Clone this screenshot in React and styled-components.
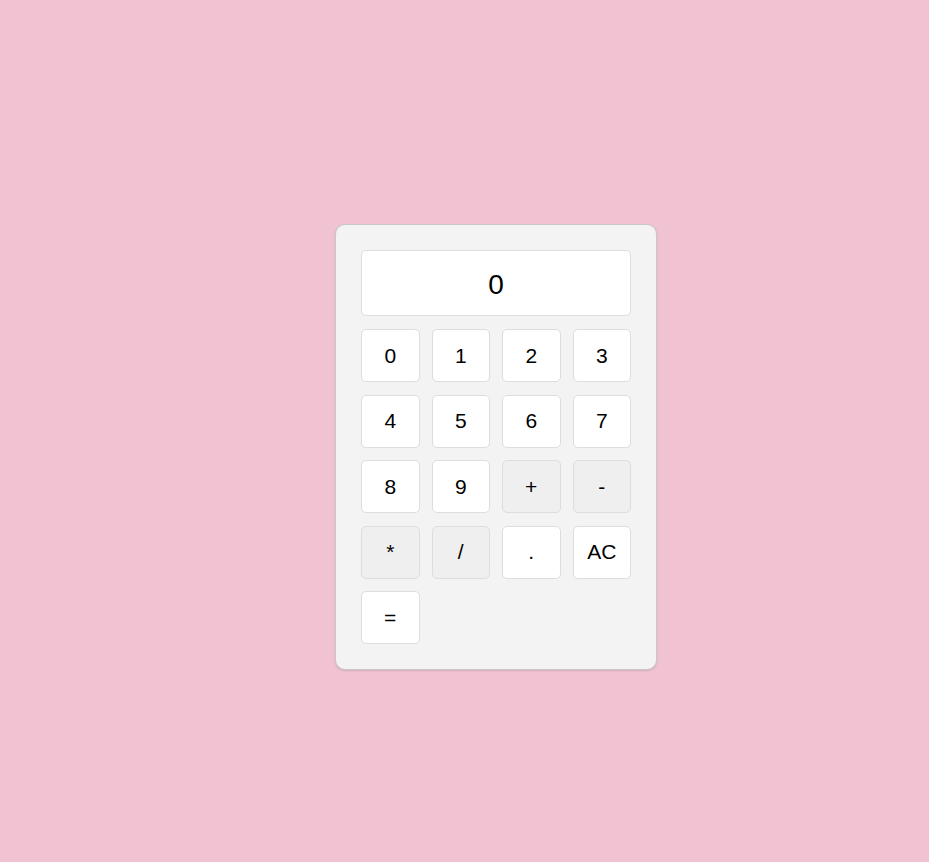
import React, { useState } from 'react'
import styled, { createGlobalStyle } from 'styled-components'

const GlobalStyle = createGlobalStyle`
  html, body {
    margin: 0;
    padding: 0;
    background: #f0c2d2;
    font-family: "Liberation Sans", Arial, sans-serif;
  }
`

const Page = styled.div`
  height: 862px;
  display: flex;
  justify-content: center;
  padding-top: 224px;
  padding-left: 63px;
  box-sizing: border-box;
`

const Calculator = styled.div`
  width: 322px;
  height: 446px;
  box-sizing: border-box;
  padding: 25px;
  background: #f3f3f3;
  border: 1px solid #c8c8c8;
  border-radius: 10px;
  box-shadow: 0 1px 2px rgba(0, 0, 0, 0.12);
`

const Display = styled.div`
  height: 66px;
  box-sizing: border-box;
  padding-top: 3px;
  display: flex;
  align-items: center;
  justify-content: center;
  background: #ffffff;
  border: 1px solid #dddddd;
  border-radius: 5px;
  font-size: 28px;
  color: #000;
  margin-bottom: 13px;
`

const Keys = styled.div`
  display: grid;
  grid-template-columns: repeat(4, 1fr);
  column-gap: 12px;
  row-gap: 12.5px;
`

const Key = styled.button`
  height: 53px;
  padding: 0;
  font-family: "Liberation Sans", Arial, sans-serif;
  font-size: 21px;
  color: #000;
  background: ${(p) => (p.$op ? '#efefef' : '#ffffff')};
  border: 1px solid #dddddd;
  border-radius: 5px;
  cursor: pointer;
`

const keys = ['0', '1', '2', '3', '4', '5', '6', '7', '8', '9', '+', '-', '*', '/', '.', 'AC', '=']
const ops = ['+', '-', '*', '/']

export default function App() {
  const [value, setValue] = useState('0')

  const press = (k) => {
    if (k === 'AC') return setValue('0')
    if (k === '=') {
      try {
        // eslint-disable-next-line no-new-func
        setValue(String(Function('return ' + value)()))
      } catch {
        setValue('Error')
      }
      return
    }
    setValue((v) => (v === '0' ? k : v + k))
  }

  return (
    <Page>
      <GlobalStyle />
      <Calculator>
        <Display>{value}</Display>
        <Keys>
          {keys.map((k) => (
            <Key key={k} $op={ops.includes(k)} onClick={() => press(k)}>
              {k}
            </Key>
          ))}
        </Keys>
      </Calculator>
    </Page>
  )
}
